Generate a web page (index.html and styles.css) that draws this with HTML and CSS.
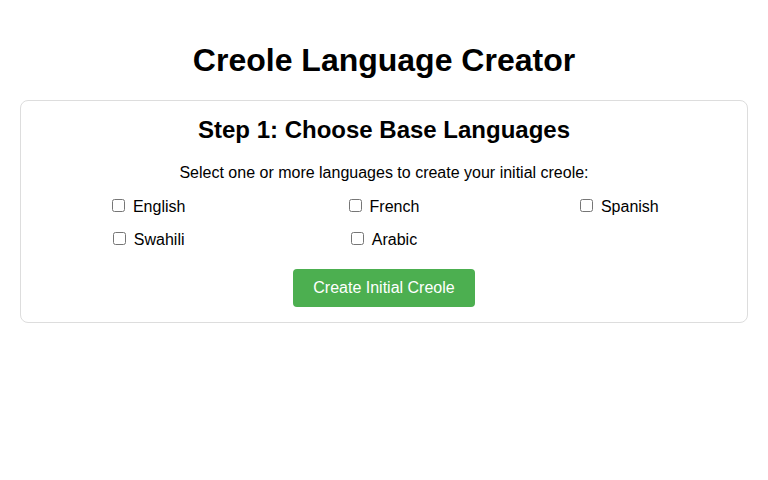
FILE: index.html
```html
<!DOCTYPE html>
<html>
<head>
<meta charset="utf-8">
<link rel="stylesheet" href="styles.css">
</head>
<body>
<h1 class="title">Creole Language Creator</h1>
<div class="card">
  <h2 class="step">Step 1: Choose Base Languages</h2>
  <p class="intro">Select one or more languages to create your initial creole:</p>
  <div class="langs">
    <label class="lang"><input type="checkbox"> English</label>
    <label class="lang"><input type="checkbox"> French</label>
    <label class="lang"><input type="checkbox"> Spanish</label>
    <label class="lang"><input type="checkbox"> Swahili</label>
    <label class="lang"><input type="checkbox"> Arabic</label>
  </div>
  <div class="actions">
    <button class="btn">Create Initial Creole</button>
  </div>
</div>
</body>
</html>
```
FILE: styles.css
```css
html, body { background: #fff; }
body {
  margin: 0;
  padding: 20px;
  font-family: "Liberation Sans", Arial, sans-serif;
  color: #000;
}
.title {
  text-align: center;
  font-size: 32px;
  font-weight: bold;
  margin: 22px 0 21px;
  line-height: 37px;
}
.card {
  border: 1px solid #ddd;
  border-radius: 8px;
  padding: 15px;
  text-align: center;
}
.step {
  font-size: 24px;
  line-height: 28px;
  margin: 0 0 20px;
}
.intro {
  font-size: 16px;
  line-height: 18px;
  margin: 0 0 16px;
}
.langs {
  display: grid;
  grid-template-columns: repeat(3, 1fr);
  column-gap: 10px;
  row-gap: 15px;
  margin-bottom: 20px;
}
.lang {
  display: flex;
  align-items: center;
  height: 18px;
  font-size: 16px;
  line-height: 18px;
  justify-self: center;
}
.lang input {
  margin: 0 8px 3px 0;
  width: 13px;
  height: 13px;
}
.actions { display: flex; justify-content: center; }
.btn {
  background: #4CAF50;
  color: #fff;
  border: none;
  border-radius: 4px;
  padding: 10px 20px;
  font-family: "Liberation Sans", Arial, sans-serif;
  font-size: 16px;
  line-height: 18px;
}
```
